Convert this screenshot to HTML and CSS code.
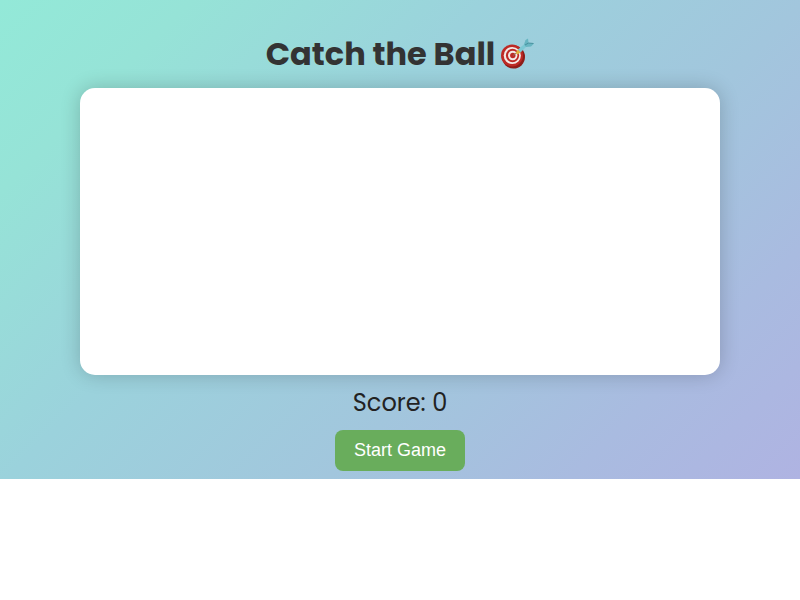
FILE: index.html
```
<!DOCTYPE html>
<html lang="en">
<head>
    <meta charset="UTF-8">
    <meta name="viewport" content="width=device-width, initial-scale=1.0">
    <title>Catch the Ball</title>
    <link rel="stylesheet" href="styles.css">
</head>
<body>
    <main class="game">
        <h1 class="title">
            Catch the Ball
            <svg class="target" viewBox="0 0 34 32" aria-hidden="true">
                <ellipse cx="13.500" cy="19" rx="11.500" ry="11.500" fill="#8d1c18"/>
                <ellipse cx="12" cy="17.500" rx="11" ry="11" fill="#bd2a25"/>
                <ellipse cx="12.300" cy="17.500" rx="8.600" ry="8.600" fill="#f3e9e6"/>
                <ellipse cx="12.500" cy="17.500" rx="6.600" ry="6.700" fill="#bd2a25"/>
                <ellipse cx="12.700" cy="17.500" rx="4.700" ry="4.800" fill="#f3e9e6"/>
                <ellipse cx="12.800" cy="17.500" rx="2.700" ry="2.800" fill="#bd2a25"/>
                <path d="M13 17.500l4-3" stroke="#8b6b55" stroke-width="1"/>
                <path d="M15.500 15l2.500-3.500 3 2.500-3.500 2.500z" fill="#e0b13c"/>
                <path d="M18 11.500l7-6 2 2.500-6.500 6.500z" fill="#7cc8d3"/>
                <path d="M24 6.500l1.500-4.500 2.500-1.500.5 4.500 5.500.5-3 3-5 .5z" fill="#67b5c1"/>
                <path d="M25 7l3.500-2 5 .5" fill="none" stroke="#3e8793" stroke-width=".8"/>
            </svg>
        </h1>
        <div class="game-area" id="gameArea"></div>
        <p class="score">Score: <span id="score">0</span></p>
        <button class="start-button" type="button">Start Game</button>
    </main>
</body>
</html>
```
FILE: styles.css
```
body {
    margin: 0;
    background: #fff;
    font-family: Poppins, Inter, sans-serif;
    color: #222;
}

.game {
    display: flex;
    flex-direction: column;
    align-items: center;
    padding: 30px 0 8px;
    background: linear-gradient(135deg, #93e9d8, #96e3d7 15%, #9bd2dc 38%, #a2c6dd 63%, #a9bbe0 82%, #afb3e2);
}

.title {
    display: flex;
    align-items: center;
    gap: 5px;
    margin: 0 0 10px;
    font-size: 32px;
    line-height: 48px;
    color: #333;
}

.target {
    width: 34px;
    height: 32px;
}

.game-area {
    width: 80%;
    height: 287px;
    background: #fff;
    border-radius: 15px;
    box-shadow: 0 0 20px rgba(0, 0, 0, 0.2);
}

.score {
    margin: 10px 0;
    font-size: 24px;
    line-height: 35px;
}

.start-button {
    padding: 10px 19px;
    border: none;
    border-radius: 8px;
    background: #69ad5c;
    color: #fff;
    font-family: "Liberation Sans", Arial, sans-serif;
    font-size: 18px;
    line-height: 21px;
    cursor: pointer;
}
```
